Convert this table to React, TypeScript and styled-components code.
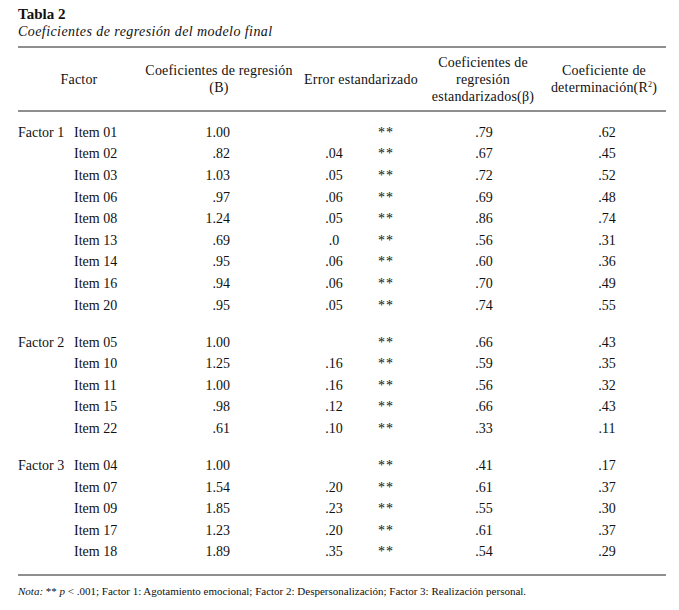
import styled, { createGlobalStyle } from 'styled-components';

const GlobalStyle = createGlobalStyle`
   html, body {
      margin: 0;
      padding: 0;
      background: #ffffff;
   }
   body {
      font-family: 'Liberation Serif', 'Times New Roman', serif;
      color: #111111;
   }
`;

type Row = [string, string, string, string, string];

interface Group {
   factor: string;
   rows: Row[];
}

const groups: Group[] = [
   {
      factor: 'Factor 1',
      rows: [
         ['Item 01', '1.00', '', '.79', '.62'],
         ['Item 02', '.82', '.04', '.67', '.45'],
         ['Item 03', '1.03', '.05', '.72', '.52'],
         ['Item 06', '.97', '.06', '.69', '.48'],
         ['Item 08', '1.24', '.05', '.86', '.74'],
         ['Item 13', '.69', '.0', '.56', '.31'],
         ['Item 14', '.95', '.06', '.60', '.36'],
         ['Item 16', '.94', '.06', '.70', '.49'],
         ['Item 20', '.95', '.05', '.74', '.55'],
      ],
   },
   {
      factor: 'Factor 2',
      rows: [
         ['Item 05', '1.00', '', '.66', '.43'],
         ['Item 10', '1.25', '.16', '.59', '.35'],
         ['Item 11', '1.00', '.16', '.56', '.32'],
         ['Item 15', '.98', '.12', '.66', '.43'],
         ['Item 22', '.61', '.10', '.33', '.11'],
      ],
   },
   {
      factor: 'Factor 3',
      rows: [
         ['Item 04', '1.00', '', '.41', '.17'],
         ['Item 07', '1.54', '.20', '.61', '.37'],
         ['Item 09', '1.85', '.23', '.55', '.30'],
         ['Item 17', '1.23', '.20', '.61', '.37'],
         ['Item 18', '1.89', '.35', '.54', '.29'],
      ],
   },
];

const App = () => {
   return (
      <Page>
         <GlobalStyle />
         <Title>Tabla 2</Title>
         <Subtitle>Coeficientes de regresión del modelo final</Subtitle>
         <Rule />
         <HeaderRow>
            <HeadCell>Factor</HeadCell>
            <HeadCell>
               Coeficientes de regresión
               <br />
               (B)
            </HeadCell>
            <HeadCell>Error estandarizado</HeadCell>
            <HeadCell>
               Coeficientes de
               <br />
               regresión
               <br />
               estandarizados(β)
            </HeadCell>
            <HeadCell>
               Coeficiente de
               <br />
               determinación(R<Sup>2</Sup>)
            </HeadCell>
         </HeaderRow>
         <Rule />
         <Body>
            {groups.map((group) => (
               <GroupBlock key={group.factor}>
                  {group.rows.map((row, i) => (
                     <DataRow key={row[0]}>
                        <Cell>{i === 0 ? group.factor : ''}</Cell>
                        <Cell $indent>{row[0]}</Cell>
                        <NumCell>{row[1]}</NumCell>
                        <CenterCell>{row[2]}</CenterCell>
                        <Stars>**</Stars>
                        <CenterCell>{row[3]}</CenterCell>
                        <CenterCell>{row[4]}</CenterCell>
                     </DataRow>
                  ))}
               </GroupBlock>
            ))}
         </Body>
         <Rule />
         <Note>
            <em>Nota:</em> ** <em>p</em> &lt; .001; Factor 1: Agotamiento emocional;
            Factor 2: Despersonalización; Factor 3: Realización personal.
         </Note>
      </Page>
   );
};

export default App;

const Page = styled.div`
   width: 648px;
   padding: 6px 13px 0 18px;
`;

const Title = styled.div`
   font-size: 15px;
   font-weight: 700;
   line-height: 17px;
`;

const Subtitle = styled.div`
   font-size: 14px;
   font-style: italic;
   line-height: 17px;
   letter-spacing: 0.43px;
   margin-bottom: 6px;
`;

const Rule = styled.div`
   height: 2px;
   background-color: #8e8e8e;
`;

const HeaderRow = styled.div`
   display: grid;
   grid-template-columns: 122px 158px 126px 118px 124px;
   align-items: center;
   height: 62px;
   font-size: 14px;
   letter-spacing: 0.2px;
`;

const HeadCell = styled.div`
   text-align: center;
   line-height: 17px;
`;

const Sup = styled.sup`
   font-size: 8px;
   vertical-align: 5px;
   line-height: 0;
`;

const Body = styled.div`
   display: flex;
   flex-direction: column;
   gap: 15.5px;
   padding: 10px 0 11px;
`;

const GroupBlock = styled.div`
   display: flex;
   flex-direction: column;
`;

const DataRow = styled.div`
   display: grid;
   grid-template-columns: 54px 68px 164px 60px 44px 152px 94px;
   align-items: center;
   height: 21.6px;
   font-size: 14px;
`;

const Cell = styled.div<{ $indent?: boolean }>`
   white-space: nowrap;
   padding-left: ${(props) => (props.$indent ? '2px' : '0')};
`;

const NumCell = styled.div`
   text-align: right;
   padding-right: 74px;
`;

const CenterCell = styled.div`
   text-align: center;
`;

const Stars = styled(CenterCell)`
   letter-spacing: 1px;
`;

const Note = styled.div`
   font-size: 11px;
   line-height: 14px;
   padding-top: 8px;
`;
